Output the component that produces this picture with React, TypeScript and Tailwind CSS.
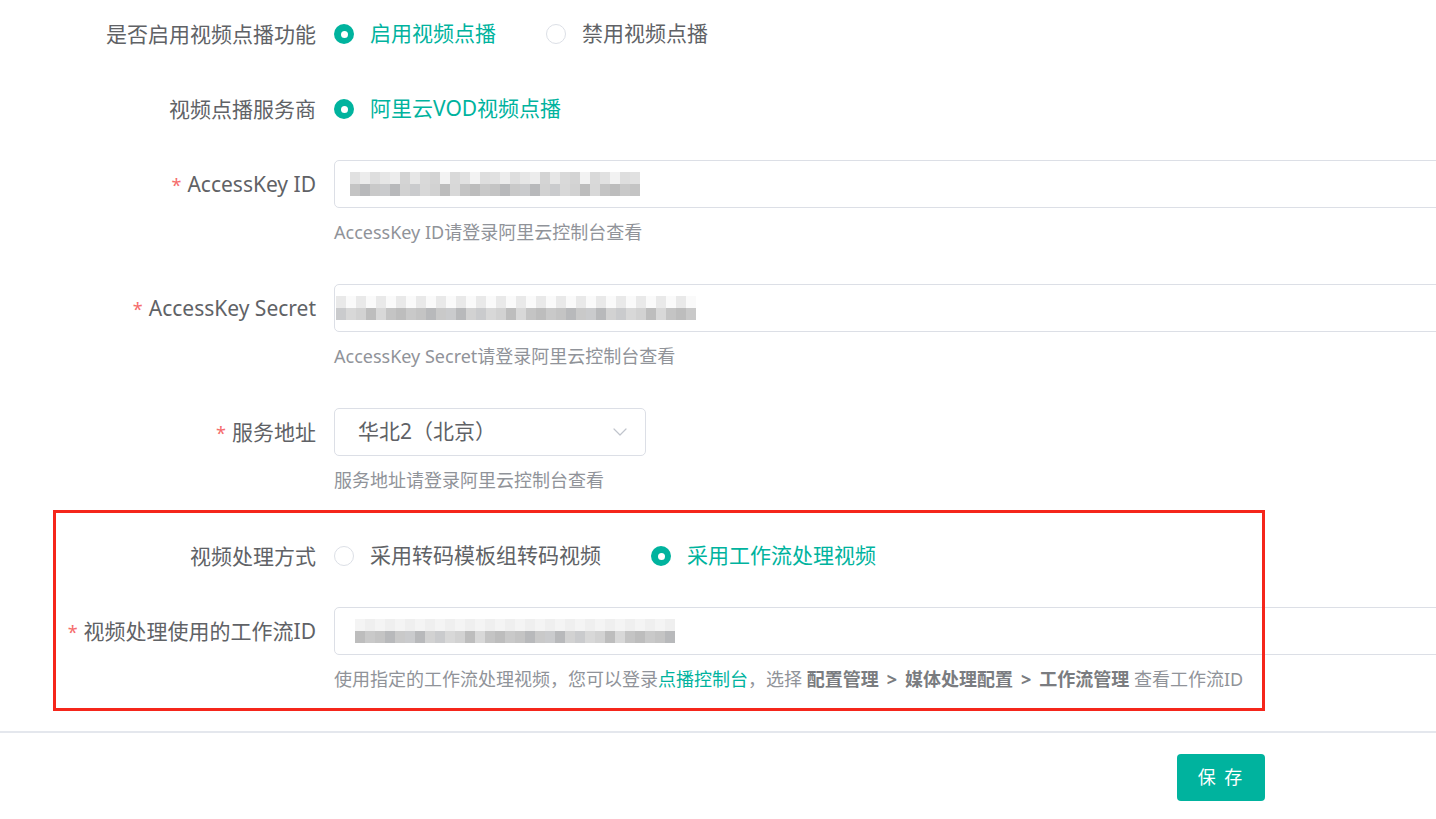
import React from 'react';
import { ChevronDown } from 'lucide-react';

const TEAL = 'text-[#00b39e]';

// pixel mosaic used to stand in for the blurred secrets
const light = ['bg-[#ececec]', 'bg-[#e1e1e1]', 'bg-[#d9d9d9]', 'bg-[#e6e6e6]', 'bg-[#dedede]', 'bg-[#f2f2f2]', 'bg-[#d4d4d4]'];
const dark = ['bg-[#c9c9c9]', 'bg-[#bdbdbd]', 'bg-[#d2d2d2]', 'bg-[#b8b9bb]', 'bg-[#c4c4c4]', 'bg-[#d8d8d8]', 'bg-[#cacbcd]'];
const faint = ['bg-[#f4f4f4]', 'bg-[#efefef]', 'bg-[#f7f7f7]', 'bg-[#e9e9e9]', 'bg-[#fafafa]'];

function Mosaic({ cols, rows, seed }: { cols: number; rows: string[][]; seed: number }) {
  return (
    <div className="flex flex-col">
      {rows.map((palette, r) => (
        <div key={r} className="flex">
          {Array.from({ length: cols }).map((_, i) => (
            <span
              key={i}
              className={`block h-[12px] w-[10px] ${palette[(i * 5 + r * 3 + seed + ((i * i) % 4)) % palette.length]}`}
            />
          ))}
        </div>
      ))}
    </div>
  );
}

function Radio({ checked, label }: { checked?: boolean; label: string }) {
  return (
    <span className="flex items-center">
      {checked ? (
        <span className="flex h-5 w-5 items-center justify-center rounded-full bg-[#00b39e]">
          <span className="h-[7px] w-[7px] rounded-full bg-white" />
        </span>
      ) : (
        <span className="h-5 w-5 rounded-full border border-[#dcdfe6] bg-white" />
      )}
      <span className={`ml-4 text-[21px] ${checked ? TEAL : 'text-[#606266]'}`}>{label}</span>
    </span>
  );
}

function Label({ text, required }: { text: string; required?: boolean }) {
  return (
    <div className="h-12 w-[334px] shrink-0 pr-[18px] text-right text-[21px] leading-[48px] text-[#606266]">
      {required && <span className="mr-[6px] text-[18px] text-[#f56c6c]">*</span>}
      {text}
    </div>
  );
}

function Help({ children }: { children: React.ReactNode }) {
  return <div className="mb-[11px] mt-[10px] text-[18px] leading-[28px] text-[#909399]">{children}</div>;
}

const Sep = () => <span className="mx-[8px]">&gt;</span>;

export default function App() {
  return (
    <div className="h-[819px] w-[1436px] overflow-hidden bg-white font-['Noto_Sans','Noto_Sans_CJK_SC',sans-serif]">
      <div className="pt-[10px]">
        <div className="mb-[27px] flex">
          <Label text="是否启用视频点播功能" />
          <div className="flex h-12 items-center gap-[50px]">
            <Radio checked label="启用视频点播" />
            <Radio label="禁用视频点播" />
          </div>
        </div>

        <div className="mb-[27px] flex">
          <Label text="视频点播服务商" />
          <div className="flex h-12 items-center">
            <Radio checked label="阿里云VOD视频点播" />
          </div>
        </div>

        <div className="mb-[27px] flex">
          <Label text="AccessKey ID" required />
          <div>
            <div className="flex h-12 w-[1200px] items-center rounded-[5px] border border-[#dcdfe6] pl-[15px]">
              <Mosaic cols={29} rows={[light, dark]} seed={1} />
            </div>
            <Help>AccessKey ID请登录阿里云控制台查看</Help>
          </div>
        </div>

        <div className="mb-[27px] flex">
          <Label text="AccessKey Secret" required />
          <div>
            <div className="flex h-12 w-[1200px] items-center rounded-[5px] border border-[#dcdfe6] pl-[1px]">
              <Mosaic cols={36} rows={[faint, dark]} seed={3} />
            </div>
            <Help>AccessKey Secret请登录阿里云控制台查看</Help>
          </div>
        </div>

        <div className="mb-[27px] flex">
          <Label text="服务地址" required />
          <div>
            <div className="flex h-12 w-[312px] items-center justify-between rounded-[5px] border border-[#dcdfe6] pl-[23px] pr-[13px]">
              <span className="text-[21px] text-[#606266]">华北2（北京）</span>
              <ChevronDown size={24} strokeWidth={1.2} className="text-[#c0c4cc]" />
            </div>
            <Help>服务地址请登录阿里云控制台查看</Help>
          </div>
        </div>

        <div className="relative">
          <div className="mb-[27px] flex">
            <Label text="视频处理方式" />
            <div className="flex h-12 items-center gap-[50px]">
              <Radio label="采用转码模板组转码视频" />
              <Radio checked label="采用工作流处理视频" />
            </div>
          </div>

          <div className="flex">
            <Label text="视频处理使用的工作流ID" required />
            <div>
              <div className="flex h-12 w-[1200px] items-center rounded-[5px] border border-[#dcdfe6] pl-[20px]">
                <Mosaic cols={32} rows={[faint, dark]} seed={5} />
              </div>
              <Help>
                使用指定的工作流处理视频，您可以登录<span className={TEAL}>点播控制台</span>，选择{' '}
                <b className="font-bold text-[#7a7c80]">
                  配置管理
                  <Sep />
                  媒体处理配置
                  <Sep />
                  工作流管理
                </b>{' '}
                查看工作流ID
              </Help>
            </div>
          </div>

          <div className="pointer-events-none absolute -bottom-[7px] -top-[22px] left-[53px] w-[1212px] border-[3px] border-[#f5261b]" />
        </div>

        <div className="mt-[27px] h-[2px] w-full bg-[#e4e7ed]" />

        <div className="flex justify-end pr-[171px] pt-[21px]">
          <button className="h-[47px] w-[88px] rounded-[4px] bg-[#00b39e] text-[18px] tracking-[2px] text-white">
            保 存
          </button>
        </div>
      </div>
    </div>
  );
}
